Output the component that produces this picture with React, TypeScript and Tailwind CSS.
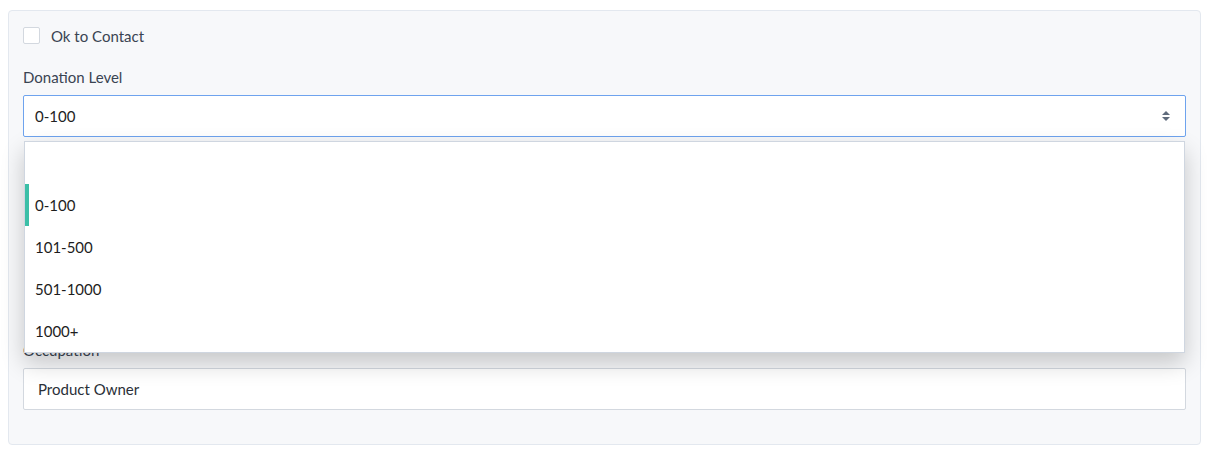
import React from 'react';

const options = ['0-100', '101-500', '501-1000', '1000+'];

function SortArrows() {
  return (
    <svg width="10" height="12" viewBox="0 0 10 12" className="text-[#5f6b7c]">
      <path d="M5 1 L9 5 H1 Z" fill="currentColor" />
      <path d="M5 11 L9 7 H1 Z" fill="currentColor" />
    </svg>
  );
}

export default function App() {
  return (
    <div className="bg-white p-2 pt-[10px] font-['Lato','Noto_Sans',sans-serif] text-[15px] leading-5">
      <div className="w-[1193px] rounded border border-[#e3e8ef] bg-[#f7f8fa] px-[14px] pt-4 pb-[34px]">
        <label className="flex h-[17px] items-center gap-[11px] text-[#3a4452]">
          <span className="h-[17px] w-[17px] rounded-[2px] border border-[#d3d8df] bg-white" />
          <span>Ok to Contact</span>
        </label>

        <div className="relative mt-[23px]">
          <div className="text-[#3a4452]">Donation Level</div>
          <div className="mt-2 flex h-[42px] items-center justify-between rounded-[2px] border border-[#6ea3ee] bg-white pl-[11px] pr-[14px] text-[#222]">
            <span>0-100</span>
            <SortArrows />
          </div>

          <div className="absolute left-px right-px top-[74px] z-10 border border-[#cfd6e0] bg-white shadow-[0_10px_22px_rgba(0,0,0,0.2)]">
            <div className="h-[42px]" />
            {options.map((o, i) => (
              <div
                key={o}
                className={
                  i === 0
                    ? 'flex h-[42px] items-center border-l-4 border-[#3cbfa7] pl-[6px] text-[#1d1d1d]'
                    : 'flex h-[42px] items-center pl-[10px] text-[#1d1d1d]'
                }
              >
                {o}
              </div>
            ))}
          </div>
        </div>

        <div className="mt-[203px]">
          <div className="text-[#3a4452]">Occupation</div>
          <div className="mt-2 flex h-[42px] items-center rounded-[2px] border border-[#d3d8df] bg-white px-[14px] text-[#2a2f37]">
            Product Owner
          </div>
        </div>
      </div>
    </div>
  );
}
